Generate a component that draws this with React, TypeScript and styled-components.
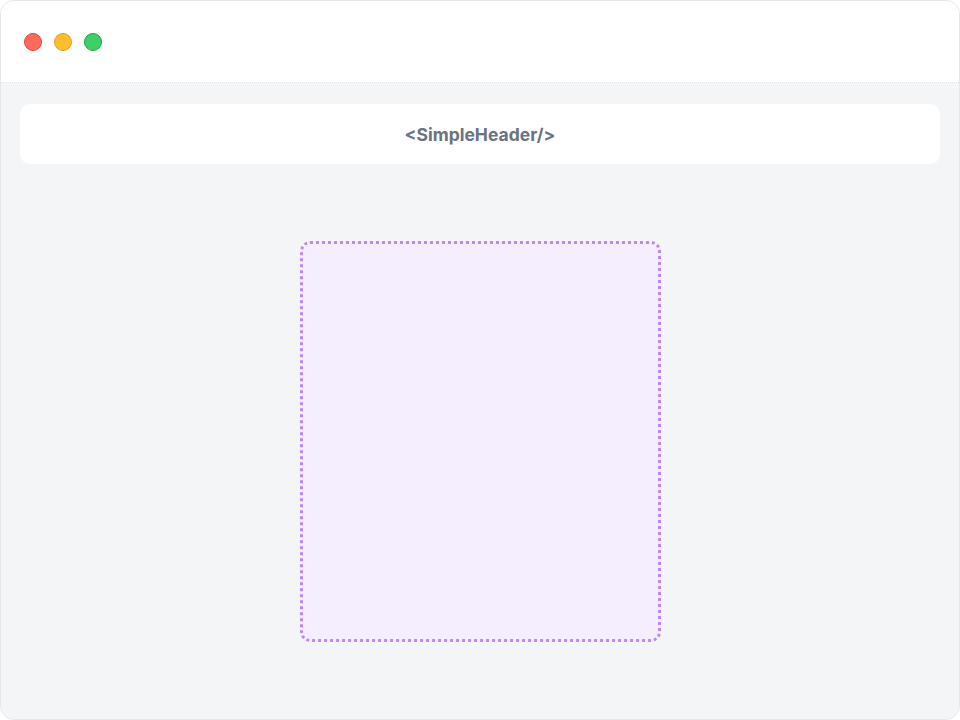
import styled, { createGlobalStyle } from 'styled-components';

const Global = createGlobalStyle`
  html, body {
    margin: 0;
    padding: 0;
    background: #ffffff;
  }
  * {
    box-sizing: border-box;
  }
`;

const Window = styled.div`
  width: 960px;
  height: 720px;
  border: 1px solid #e5e7eb;
  border-radius: 14px;
  overflow: hidden;
  display: flex;
  flex-direction: column;
  background: #f4f5f7;
  font-family: Inter, 'Noto Sans', sans-serif;
`;

const TitleBar = styled.div`
  height: 82px;
  flex-shrink: 0;
  background: #ffffff;
  border-bottom: 1px dotted #dfe2e6;
  display: flex;
  align-items: center;
  gap: 12px;
  padding-left: 23px;
`;

const Dot = styled.span<{ $fill: string; $edge: string }>`
  width: 18px;
  height: 18px;
  border-radius: 50%;
  background: ${(p) => p.$fill};
  border: 1px solid ${(p) => p.$edge};
`;

const Body = styled.div`
  flex: 1;
  display: flex;
  flex-direction: column;
  align-items: center;
  padding: 21px 19px 0 19px;
`;

const HeaderCard = styled.div`
  width: 100%;
  height: 60px;
  background: #ffffff;
  border-radius: 10px;
  display: flex;
  align-items: center;
  justify-content: center;
  font-size: 17.5px;
  font-weight: 700;
  color: #6b7280;
`;

const Slot = styled.div`
  margin-top: 77px;
  width: 361px;
  height: 401px;
  border: 3px dotted #c084fc;
  border-radius: 10px;
  background: #f5eefe;
`;

export default function App() {
  return (
    <>
      <Global />
      <Window>
        <TitleBar>
          <Dot $fill="#ff6b5a" $edge="#e0443e" />
          <Dot $fill="#ffbd2e" $edge="#dea123" />
          <Dot $fill="#3fcf6a" $edge="#1aab29" />
        </TitleBar>
        <Body>
          <HeaderCard>{'<SimpleHeader/>'}</HeaderCard>
          <Slot />
        </Body>
      </Window>
    </>
  );
}
